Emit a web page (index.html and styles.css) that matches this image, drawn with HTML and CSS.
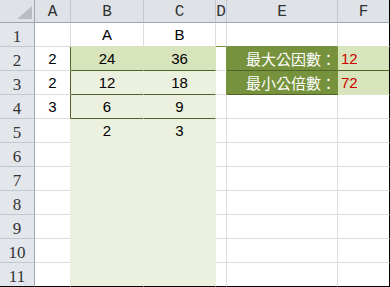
FILE: index.html
```html
<!DOCTYPE html>
<html lang="zh-Hant">
<head>
    <meta charset="UTF-8">
    <meta name="viewport" content="width=device-width, initial-scale=1.0">
    <title>最大公因數與最小公倍數</title>
    <link rel="stylesheet" href="styles.css">
</head>
<body>
    <div class="sheet">
        <!-- column headers -->
        <div class="row">
            <div class="hd corner"><span class="tri"></span></div>
            <div class="hd">A</div>
            <div class="hd">B</div>
            <div class="hd">C</div>
            <div class="hd">D</div>
            <div class="hd">E</div>
            <div class="hd">F</div>
        </div>

        <div class="row">
            <div class="rh">1</div>
            <div></div>
            <div class="under-mid">A</div>
            <div class="under-mid">B</div>
            <div class="under-olive"></div>
            <div class="under-olive"></div>
            <div class="under-mid"></div>
        </div>

        <!-- the two numbers being compared, three steps of division -->
        <div class="row">
            <div class="rh">2</div>
            <div class="er">2</div>
            <div class="mid eb">24</div>
            <div class="mid eb">36</div>
            <div class="beside-olive"></div>
            <div class="olive eb label">最大公因數：</div>
            <div class="mid eb answer">12</div>
        </div>
        <div class="row">
            <div class="rh">3</div>
            <div class="er">2</div>
            <div class="light eb">12</div>
            <div class="light eb">18</div>
            <div class="beside-olive"></div>
            <div class="olive eb label">最小公倍數：</div>
            <div class="mid answer">72</div>
        </div>
        <div class="row">
            <div class="rh">4</div>
            <div class="er">3</div>
            <div class="light eb">6</div>
            <div class="light eb">9</div>
            <div></div>
            <div></div>
            <div></div>
        </div>
        <div class="row">
            <div class="rh">5</div>
            <div class="beside-light"></div>
            <div class="light">2</div>
            <div class="light">3</div>
            <div></div>
            <div></div>
            <div></div>
        </div>
        <div class="row">
            <div class="rh">6</div>
            <div class="beside-light"></div>
            <div class="light"></div>
            <div class="light"></div>
            <div></div>
            <div></div>
            <div></div>
        </div>
        <div class="row">
            <div class="rh">7</div>
            <div class="beside-light"></div>
            <div class="light"></div>
            <div class="light"></div>
            <div></div>
            <div></div>
            <div></div>
        </div>
        <div class="row">
            <div class="rh">8</div>
            <div class="beside-light"></div>
            <div class="light"></div>
            <div class="light"></div>
            <div></div>
            <div></div>
            <div></div>
        </div>
        <div class="row">
            <div class="rh">9</div>
            <div class="beside-light"></div>
            <div class="light"></div>
            <div class="light"></div>
            <div></div>
            <div></div>
            <div></div>
        </div>
        <div class="row">
            <div class="rh">10</div>
            <div class="beside-light"></div>
            <div class="light"></div>
            <div class="light"></div>
            <div></div>
            <div></div>
            <div></div>
        </div>
        <div class="row">
            <div class="rh">11</div>
            <div class="beside-light"></div>
            <div class="light"></div>
            <div class="light"></div>
            <div></div>
            <div></div>
            <div></div>
        </div>
    </div>
</body>
</html>
```

FILE: styles.css
```css
* {
    box-sizing: border-box;
}
body {
    margin: 0;
    background: #fff;
}
.sheet {
    display: grid;
    grid-template-columns: 35px 36px 73px 72px 11px 111px 52px;
    grid-template-rows: 23px repeat(11, 24px);
    width: 390px;
    font-family: 'Liberation Sans', Arial, sans-serif;
    font-size: 15px;
    color: #000;
}
.row {
    display: contents;
}
.row > div {
    display: flex;
    align-items: flex-end;
    justify-content: center;
    padding-bottom: 3px;
    border-right: 1px solid #dadcdd;
    border-bottom: 1px solid #dadcdd;
    white-space: nowrap;
    line-height: 17px;
}

/* headers */
.row > .hd {
    background: #dfe3e8;
    border-right-color: #c2c8cf;
    border-bottom-color: #9ea7b1;
    font-family: 'Liberation Mono', 'Courier New', monospace;
    font-size: 16px;
    color: #333;
    padding-bottom: 1px;
}
.row > .corner {
    justify-content: flex-end;
    padding: 0 2px 3px 0;
    border-right-color: #9ea7b1;
}
.tri {
    width: 15px;
    height: 13px;
    background: #b8bdc3;
    clip-path: polygon(100% 0, 100% 100%, 0 100%);
}
.row > .rh {
    background: #e3e7ec;
    border-right-color: #9ea7b1;
    border-bottom-color: #c2c8cf;
    font-family: 'Liberation Serif', 'Times New Roman', serif;
    font-size: 17px;
    color: #333;
    padding-bottom: 1px;
}

/* fills cover their own grid lines */
.row > .mid {
    background: #d8e4bc;
    border-color: #d8e4bc;
}
.row > .light {
    background: #ebf1de;
    border-color: #ebf1de;
}
.row > .olive {
    background: #76923c;
    border-color: #76923c;
}
.row > .under-mid { border-bottom-color: #d8e4bc; }
.row > .under-olive { border-bottom-color: #76923c; }
.row > .beside-olive { border-right-color: #76923c; }
.row > .beside-light { border-right-color: #ebf1de; }

/* dark borders round the division */
.row > .eb { border-bottom-color: #4f6228; }
.row > .er { border-right-color: #4f6228; }

/* sheet frame */
.row > div:last-child { border-right-color: #000; }
.row:last-child > div { border-bottom-color: #000; }

.row > .label {
    justify-content: flex-end;
    padding-right: 1px;
    font-family: 'Noto Sans CJK TC', 'Noto Sans CJK SC', sans-serif;
    color: #fff;
}
.row > .answer {
    justify-content: flex-start;
    padding-left: 3px;
    color: #cc0000;
}
```
